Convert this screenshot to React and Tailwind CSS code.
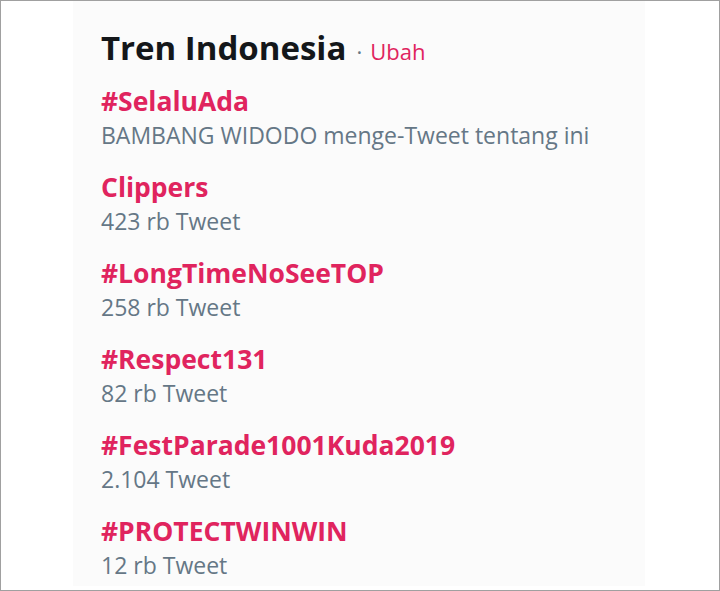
export default function App() {
  const trends = [
    { name: "#SelaluAda", sub: "BAMBANG WIDODO menge-Tweet tentang ini" },
    { name: "Clippers", sub: "423 rb Tweet" },
    { name: "#LongTimeNoSeeTOP", sub: "258 rb Tweet" },
    { name: "#Respect131", sub: "82 rb Tweet" },
    { name: "#FestParade1001Kuda2019", sub: "2.104 Tweet" },
    { name: "#PROTECTWINWIN", sub: "12 rb Tweet" },
  ];
  return (
    <div
      className="w-[720px] h-[591px] border border-[#a0a0a0] bg-white flex pl-[72px] overflow-hidden"
      style={{ fontFamily: '"Open Sans", "Noto Sans", sans-serif' }}
    >
      <div className="w-[572px] h-[585px] bg-[#fbfbfb] pl-[28px] pt-[29px]">
        <div className="h-[36px] leading-[36px] whitespace-nowrap">
          <span className="text-[33px] font-bold text-[#14171a]">Tren Indonesia</span>
          <span className="ml-[10px] text-[22px] text-[#657786]">·</span>
          <span className="ml-[8px] text-[22px] text-[#e0245e]">Ubah</span>
        </div>
        <div className="mt-[19px] flex flex-col gap-[19px]">
          {trends.map((t) => (
            <div key={t.name} className="flex flex-col">
              <div className="h-[33px] leading-[33px] text-[26.5px] font-bold text-[#e0245e] whitespace-nowrap">
                {t.name}
              </div>
              <div className="mt-[1px] h-[33px] leading-[33px] text-[23px] text-[#657786] whitespace-nowrap">
                {t.sub}
              </div>
            </div>
          ))}
        </div>
      </div>
    </div>
  );
}
